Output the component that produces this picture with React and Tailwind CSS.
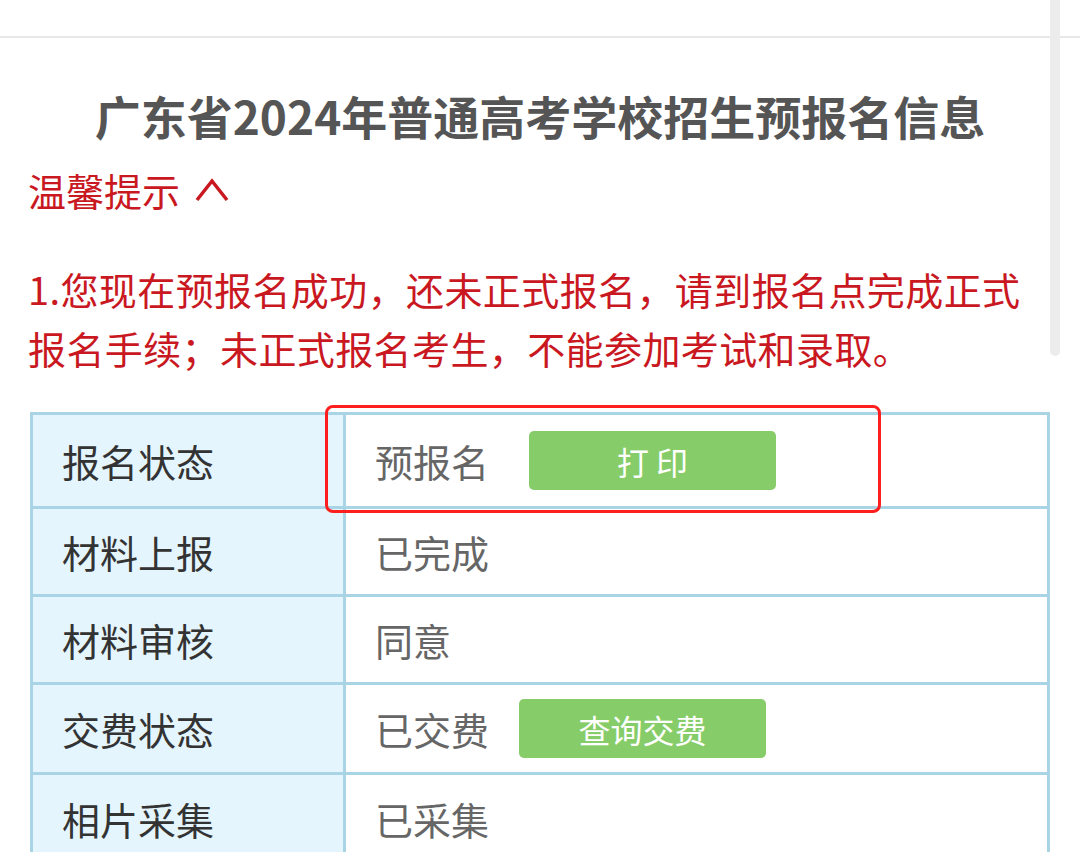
import React from "react";

const rows = [
  { label: "报名状态", value: "预报名", h: "h-[94px]", btn: { text: "打 印", ml: "ml-[40px]" } },
  { label: "材料上报", value: "已完成", h: "h-[88px]" },
  { label: "材料审核", value: "同意", h: "h-[88px]" },
  { label: "交费状态", value: "已交费", h: "h-[90px]", btn: { text: "查询交费", ml: "ml-[30px]" } },
  { label: "相片采集", value: "已采集", h: "h-[90px]" },
];

export default function App() {
  return (
    <div
      className="relative w-[1080px] h-[852px] overflow-hidden bg-white"
      style={{ fontFamily: '"Noto Sans CJK SC", "Noto Sans", sans-serif' }}
    >
      <div className="h-[38px] border-b-2 border-[#e8e8e8]" />
      <div className="pt-[47px]">
        <h1 className="text-center text-[46px] leading-[60px] font-bold text-[#555555]">
          广东省2024年普通高考学校招生预报名信息
        </h1>
        <div className="mt-[20px] pl-[28px] flex items-center text-[38px] leading-[50px] text-[#c9181f]">
          <span>温馨提示</span>
          <svg className="ml-[14px]" width="36" height="26" viewBox="0 0 36 26" fill="none">
            <path d="M3 23 L18 4 L33 23" stroke="#c9181f" strokeWidth="3.5" strokeLinejoin="miter" />
          </svg>
        </div>
        <p className="mt-[44px] pl-[28px] pr-[40px] text-[38px] leading-[59px] tracking-[0.4px] text-[#c9181f]">
          1.您现在预报名成功，还未正式报名，请到报名点完成正式报名手续；未正式报名考生，不能参加考试和录取。
        </p>
        <div className="mt-[35px] ml-[30px] w-[1020px] border-[3px] border-b-0 border-[#a9d4e5]">
          {rows.map((r, i) => (
            <div key={i} className={`flex ${r.h} border-b-[3px] border-[#a9d4e5]`}>
              <div className="w-[313px] shrink-0 bg-[#e4f5fd] border-r-[3px] border-[#a9d4e5] flex items-center pl-[29px] text-[38px] text-[#333333]">
                {r.label}
              </div>
              <div className="flex-1 flex items-center pl-[29px] text-[38px] text-[#666666]">
                <span>{r.value}</span>
                {r.btn && (
                  <div
                    className={`${r.btn.ml} w-[247px] h-[59px] rounded-[5px] bg-[#86cd6a] flex items-center justify-center text-[32px] text-white`}
                  >
                    {r.btn.text}
                  </div>
                )}
              </div>
            </div>
          ))}
        </div>
      </div>
      <div className="absolute left-[325px] top-[405px] w-[556px] h-[108px] border-[3px] border-[#ff1e1e] rounded-[8px]" />
      <div className="absolute left-[1050px] top-0 w-[10px] h-[356px] rounded-b-[5px] bg-[#ececec]" />
    </div>
  );
}
